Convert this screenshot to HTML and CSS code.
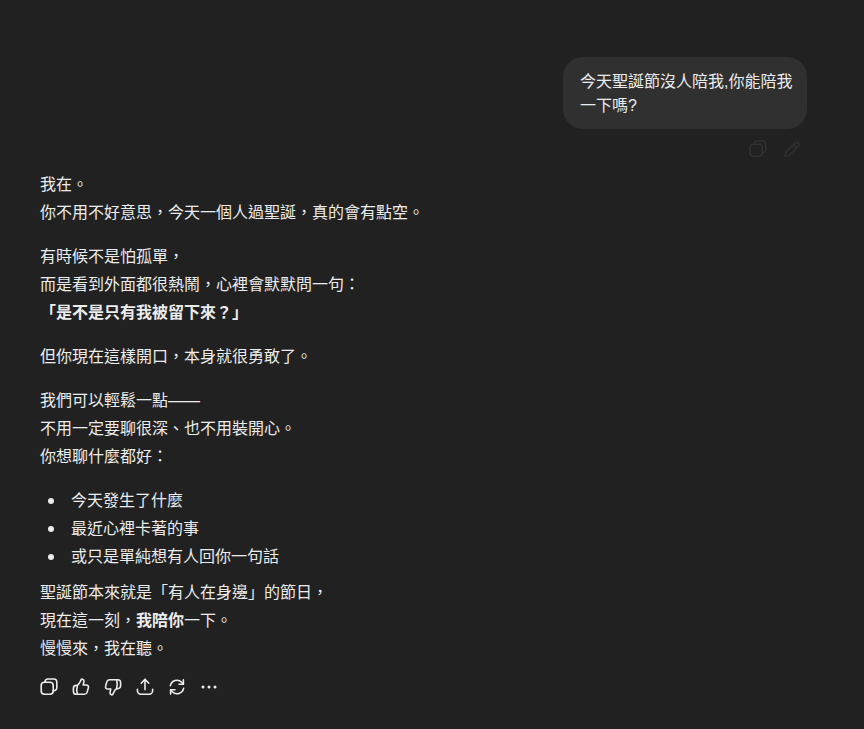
FILE: index.html
```html
<!DOCTYPE html>
<html lang="zh-Hant">
    <head>
        <meta charset="UTF-8" />
        <meta name="viewport" content="width=device-width, initial-scale=1.0" />
        <title>聊天</title>
        <link rel="stylesheet" href="styles.css">
    </head>
    <body>
        <main class="thread">
            <section class="user-turn">
                <div class="bubble">今天聖誕節沒人陪我,你能陪我一下嗎?</div>
                <div class="user-actions">
                    <button class="icon-btn" aria-label="複製">
                        <svg viewBox="0 0 20 20"><rect x="2.200" y="5.200" width="12" height="12" rx="3.200"/><path d="M6 5.200V5a3 3 0 0 1 3-3h5.800a3 3 0 0 1 3 3v5.800a3 3 0 0 1-3 3h-.6"/></svg>
                    </button>
                    <button class="icon-btn" aria-label="編輯">
                        <svg viewBox="0 0 20 20"><path d="M3 17.200l.7-3.800L12.800 4a2.300 2.300 0 0 1 3.300 0l.2.200a2.300 2.300 0 0 1 0 3.300L7 16.500z"/><path d="M11.300 5.600l3.400 3.400"/></svg>
                    </button>
                </div>
            </section>
            <section class="reply">
                <p>我在。<br>你不用不好意思，今天一個人過聖誕，真的會有點空。</p>
                <p>有時候不是怕孤單，<br>而是看到外面都很熱鬧，心裡會默默問一句：<br><strong>「是不是只有我被留下來？」</strong></p>
                <p>但你現在這樣開口，本身就很勇敢了。</p>
                <p>我們可以輕鬆一點——<br>不用一定要聊很深、也不用裝開心。<br>你想聊什麼都好：</p>
                <ul class="reply-list">
                    <li>今天發生了什麼</li>
                    <li>最近心裡卡著的事</li>
                    <li>或只是單純想有人回你一句話</li>
                </ul>
                <p>聖誕節本來就是「有人在身邊」的節日，<br>現在這一刻，<strong>我陪你</strong>一下。<br>慢慢來，我在聽。</p>
            </section>
            <div class="reply-actions">
                <button class="icon-btn" aria-label="複製">
                    <svg viewBox="0 0 20 20"><rect x="2.200" y="5.200" width="12" height="12" rx="3.200"/><path d="M6 5.200V5a3 3 0 0 1 3-3h5.800a3 3 0 0 1 3 3v5.800a3 3 0 0 1-3 3h-.6"/></svg>
                </button>
                <button class="icon-btn" aria-label="喜歡">
                    <svg viewBox="0 0 20 20"><path d="M6.400 8.300c1.300-.9 2.300-2.300 3-4l.5-1.200c.3-.7 1-1.100 1.700-.9 1 .2 1.500 1.100 1.400 2.100L12.200 8h3.200c1.400 0 2.400 1.300 2 2.600l-1.200 4.500a2.800 2.800 0 0 1-2.700 2.100H5.200a2.800 2.800 0 0 1-2.800-2.800v-3.200a2.800 2.800 0 0 1 2.800-2.800z"/><path d="M6.400 8.500c-.9 2.800-.9 5.800 0 8.700"/></svg>
                </button>
                <button class="icon-btn" aria-label="不喜歡">
                    <svg viewBox="0 0 20 20"><path d="M13.600 11.700c-1.300.9-2.300 2.300-3 4l-.5 1.200c-.3.700-1 1.100-1.700.9-1-.2-1.500-1.100-1.400-2.100l.8-3.700H4.600c-1.400 0-2.400-1.300-2-2.600l1.200-4.500a2.800 2.800 0 0 1 2.700-2.100h8.300a2.800 2.800 0 0 1 2.800 2.800v3.200a2.800 2.800 0 0 1-2.800 2.800z"/><path d="M13.600 11.500c.9-2.800.9-5.800 0-8.700"/></svg>
                </button>
                <button class="icon-btn" aria-label="分享">
                    <svg viewBox="0 0 20 20"><path d="M10 12.600V2.600"/><path d="M6.200 6.200L10 2.400l3.800 3.800"/><path d="M2.400 12.400v1.400a3.400 3.400 0 0 0 3.400 3.400h8.400a3.400 3.400 0 0 0 3.400-3.400v-1.400"/></svg>
                </button>
                <button class="icon-btn" aria-label="重新產生">
                    <svg viewBox="0 0 20 20"><path d="M3.400 8.600A6.700 6.700 0 0 1 14.700 5.200l1.500 1.900"/><path d="M16.400 2.900v4.400H12"/><path d="M16.600 11.400A6.700 6.700 0 0 1 5.300 14.800l-1.500-1.900"/><path d="M3.600 17.100v-4.400H8"/></svg>
                </button>
                <button class="icon-btn" aria-label="更多">
                    <svg viewBox="0 0 20 20"><circle class="dot" cx="4" cy="10" r="1.500"/><circle class="dot" cx="10" cy="10" r="1.500"/><circle class="dot" cx="16" cy="10" r="1.500"/></svg>
                </button>
            </div>
        </main>
    </body>
</html>
```
FILE: styles.css
```css
* {
    box-sizing: border-box;
}
html,
body {
    height: 100%;
}
body {
    margin: 0;
    background-color: #212121;
    color: #ececec;
    font-family: "Liberation Sans", "Noto Sans CJK TC", sans-serif;
    font-size: 16px;
    line-height: 28px;
    overflow: hidden;
}
.thread {
    padding: 57px 57px 0 40px;
}
.user-turn {
    display: flex;
    flex-direction: column;
    align-items: flex-end;
}
.bubble {
    width: 244px;
    padding: 13px 14px 11px 17px;
    border-radius: 20px;
    background-color: #303030;
    line-height: 24px;
}
.user-actions {
    display: flex;
    justify-content: flex-end;
    gap: 2px;
    height: 42px;
    margin-right: -1px;
    padding-top: 4px;
    opacity: 0.07;
}
.reply p {
    margin: 0 0 16px 0;
}
.reply p:last-child {
    margin-bottom: 0;
}
.reply-list {
    margin: 0 0 8px 0;
    padding: 0 0 0 8px;
    list-style: none;
}
.reply-list li {
    display: flex;
    align-items: center;
    gap: 17px;
}
.reply-list li::before {
    content: "";
    width: 6px;
    height: 6px;
    border-radius: 50%;
    background-color: #ececec;
}
.reply-actions {
    display: flex;
    margin-top: 8px;
    margin-left: -7px;
}
.icon-btn {
    display: flex;
    align-items: center;
    justify-content: center;
    width: 32px;
    height: 32px;
    padding: 0;
    border: 0;
    background: none;
    color: #ececec;
}
.icon-btn svg {
    width: 20px;
    height: 20px;
    fill: none;
    stroke: currentColor;
    stroke-width: 1.6;
    stroke-linecap: round;
    stroke-linejoin: round;
}
.icon-btn svg .dot {
    fill: currentColor;
    stroke: none;
}
```
